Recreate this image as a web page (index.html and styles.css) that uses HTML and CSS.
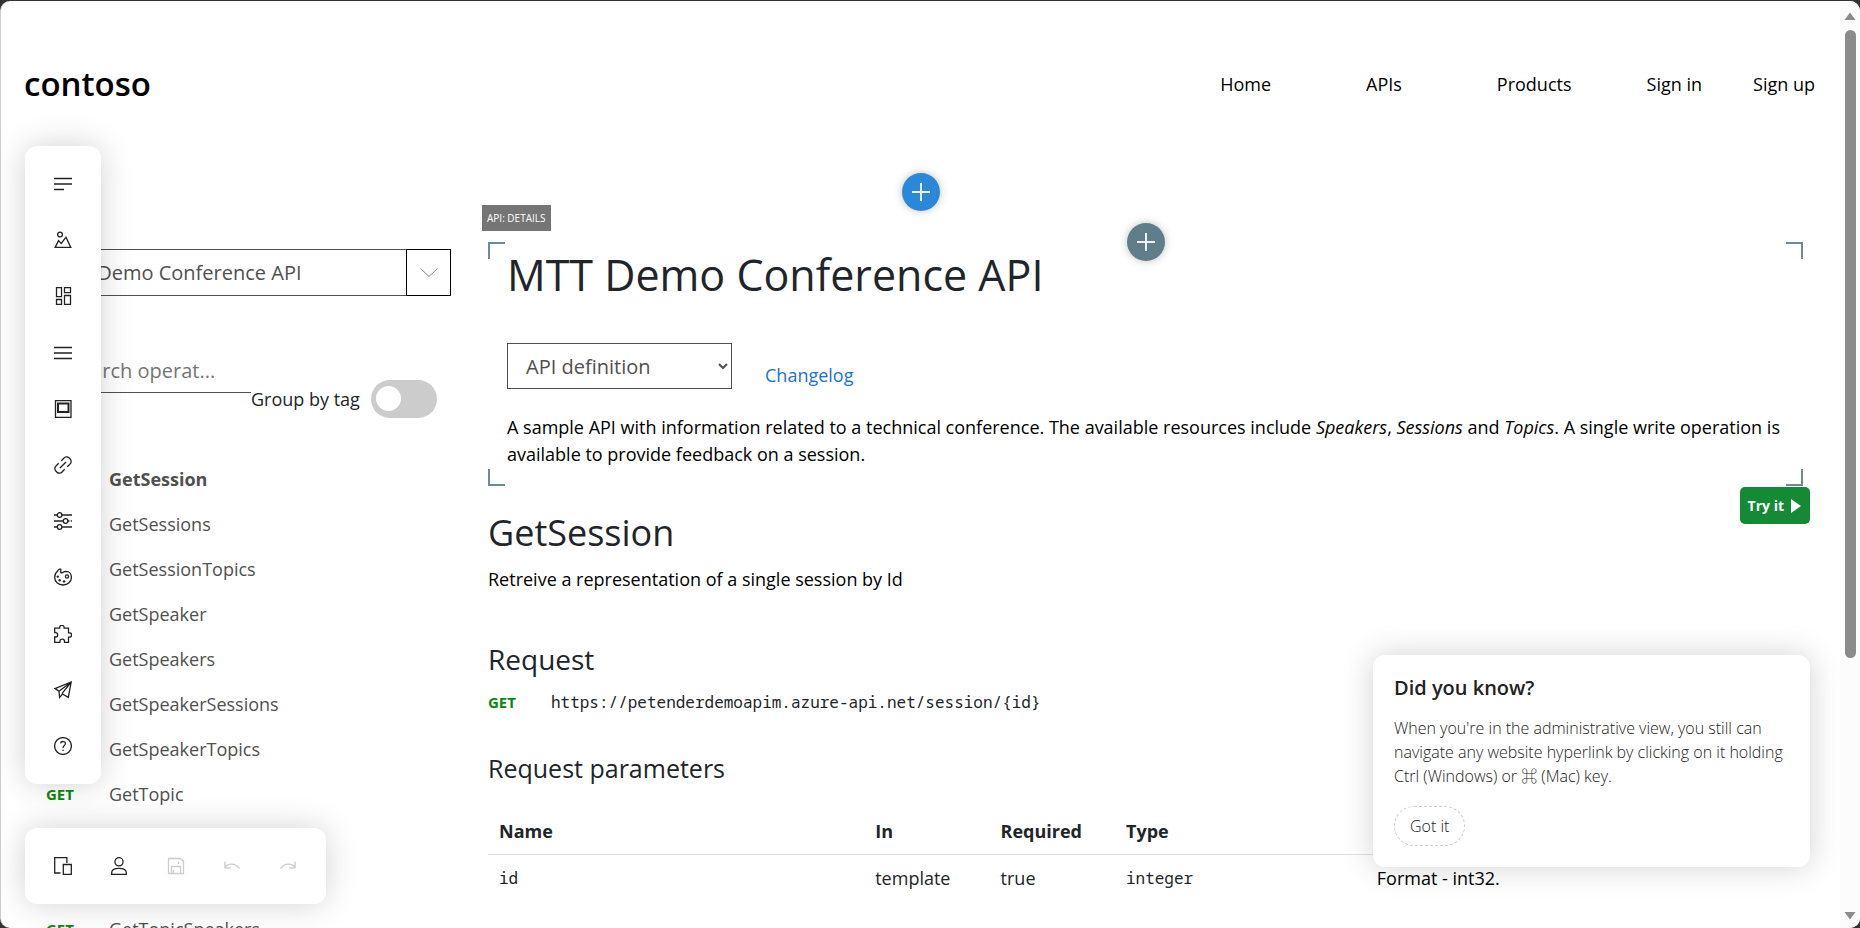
FILE: index.html
```html
<!DOCTYPE html>
<html lang="en">
<head>
<meta charset="utf-8">
<title>Contoso developer portal</title>
<link rel="stylesheet" href="styles.css">
</head>
<body>
<div class="window">
  <div class="page">
    <header class="header">
      <a class="logo" href="#">contoso</a>
      <nav class="nav">
        <a href="#">Home</a>
        <a href="#">APIs</a>
        <a href="#">Products</a>
      </nav>
      <nav class="account">
        <a href="#">Sign in</a>
        <a href="#">Sign up</a>
      </nav>
    </header>

    <div class="columns">
      <aside class="sidebar">
        <div class="api-picker">
          <input class="api-input" type="text" aria-label="API" value="MTT Demo Conference API" readonly>
          <button class="api-toggle" type="button" aria-label="Open API list">
            <svg width="20" height="12" viewBox="0 0 20 12"><path d="M1.500 1.500 10 9.500 18.500 1.500" /></svg>
          </button>
        </div>
        <div class="filters">
          <input class="search" type="text" aria-label="Search operations" placeholder="Search operat...">
          <label class="group" for="group-tag">Group by tag</label>
          <input class="switch" id="group-tag" type="checkbox">
        </div>
        <ul class="operations">
          <li><span class="verb">GET</span><a class="current" href="#">GetSession</a></li>
          <li><span class="verb">GET</span><a href="#">GetSessions</a></li>
          <li><span class="verb">GET</span><a href="#">GetSessionTopics</a></li>
          <li><span class="verb">GET</span><a href="#">GetSpeaker</a></li>
          <li><span class="verb">GET</span><a href="#">GetSpeakers</a></li>
          <li><span class="verb">GET</span><a href="#">GetSpeakerSessions</a></li>
          <li><span class="verb">GET</span><a href="#">GetSpeakerTopics</a></li>
          <li><span class="verb">GET</span><a href="#">GetTopic</a></li>
          <li><span class="verb">GET</span><a href="#">GetTopics</a></li>
          <li><span class="verb">GET</span><a href="#">GetTopicSessions</a></li>
          <li><span class="verb">GET</span><a href="#">GetTopicSpeakers</a></li>
        </ul>
      </aside>

      <main class="main">
        <section class="details">
          <span class="widget-tag">API: DETAILS</span>
          <i class="corner tl"></i><i class="corner tr"></i><i class="corner bl"></i><i class="corner br"></i>
          <button class="add add-widget" type="button" aria-label="Add widget">
            <svg width="18" height="18" viewBox="0 0 18 18"><path d="M9 0v18M0 9h18" /></svg>
          </button>
          <h1>MTT Demo Conference API</h1>
          <div class="definition">
            <select aria-label="API definition"><option>API definition</option></select>
            <a href="#">Changelog</a>
          </div>
          <p>A sample API with information related to a technical conference. The available resources include <em>Speakers</em>, <em>Sessions</em> and <em>Topics</em>. A single write operation is available to provide feedback on a session.</p>
        </section>

        <section class="operation">
          <button class="try" type="button">Try it
            <svg width="10" height="14" viewBox="0 0 10 14"><path d="M0 0 10 7 0 14z" /></svg>
          </button>
          <h2>GetSession</h2>
          <p>Retreive a representation of a single session by Id</p>
          <h3>Request</h3>
          <div class="request"><span class="verb">GET</span><code>https://petenderdemoapim.azure-api.net/session/{id}</code></div>
          <h4>Request parameters</h4>
          <table>
            <colgroup><col class="c-name"><col class="c-in"><col class="c-req"><col class="c-type"><col class="c-desc"></colgroup>
            <thead><tr><th>Name</th><th>In</th><th>Required</th><th>Type</th><th>Description</th></tr></thead>
            <tbody><tr><td><code>id</code></td><td>template</td><td>true</td><td><code>integer</code></td><td class="note">Format - int32.</td></tr></tbody>
          </table>
        </section>
      </main>
    </div>

    <button class="add add-section" type="button" aria-label="Add section">
      <svg width="18" height="18" viewBox="0 0 18 18"><path d="M9 0v18M0 9h18" /></svg>
    </button>

    <div class="toolbar side" role="toolbar" aria-label="Editor">
      <button type="button" aria-label="Pages"><svg viewBox="0 0 18 18"><path d="M0 3.500h18M0 9h18M0 14.500h10" /></svg></button>
      <button type="button" aria-label="Media"><svg viewBox="0 0 18 18"><circle cx="6" cy="3.500" r="2.400" /><path d="M1.200 16.400 4.500 9.600 7.200 12.400 12 6.200 16.800 16.400z" /></svg></button>
      <button type="button" aria-label="Layouts"><svg viewBox="0 0 18 18"><path d="M2.500.600h5v9h-5zM10.500.600h6v5h-6zM2.500 12.500h5v5h-5zM10.500 8.500h6v9h-6z" /></svg></button>
      <button type="button" aria-label="Navigation"><svg viewBox="0 0 18 18"><path d="M0 3.500h18M0 9h18M0 14.500h18" /></svg></button>
      <button type="button" aria-label="Pop-ups"><svg viewBox="0 0 18 18"><path d="M1.500.600h15.500v16.800H1.500z" /><path class="bold" d="M4 3.500h10.500v8.500H4z" /></svg></button>
      <button type="button" aria-label="URLs"><svg viewBox="0 0 18 18"><path d="M6 12 12 6M7.300 4.700 9.800 2.200a3.500 3.500 0 0 1 5.200-.4l1.200 1.200a3.500 3.500 0 0 1-.4 5.200L13.300 10.700M4.700 7.300 2.200 9.800a3.500 3.500 0 0 0-.4 5.200l1.200 1.200a3.500 3.500 0 0 0 5.200-.4L10.700 13.300" /></svg></button>
      <button type="button" aria-label="Settings"><svg viewBox="0 0 18 18"><path d="M0 3h3.200M8 3h10M0 9h9.200M14 9h1.500M16.800 9H18M0 15h3.200M8 15h10" /><circle cx="5.600" cy="3" r="2.300" /><circle cx="11.600" cy="9" r="2.300" /><circle cx="5.600" cy="15" r="2.300" /></svg></button>
      <button type="button" aria-label="Styles"><svg viewBox="0 0 18 18"><path d="M3.600 3C4.500 1.200 6.200.700 6.700 1.200c.7.700-.5 2.500.3 3.500.9 1 2.300-1.300 5-1.400 3.500 0 5.400 2.900 5.400 6 0 4.300-3.500 7.700-8.300 7.700-4.900 0-8.400-3.200-8.400-7.600C.7 6.800 1.800 4.500 3.600 3z" /><circle cx="13" cy="8.500" r="1.600" /><circle class="dot" cx="3.800" cy="8.600" r="1.200" /><circle class="dot" cx="5.700" cy="12.300" r="1.200" /><circle class="dot" cx="10" cy="13.400" r="1.200" /></svg></button>
      <button type="button" aria-label="Plugins"><svg viewBox="0 0 18 18"><path d="M.7 3.200h5V2.300a2.200 2 0 0 1 4.400 0v.9h4.400v4.600h1a2.100 2.200 0 0 1 0 4.400h-1v5.100h-4v-1a2.300 2.100 0 0 0-4.600 0v1H.7v-5.300h.9a2.100 2.200 0 0 0 0-4.400H.7z" /></svg></button>
      <button type="button" aria-label="Publish"><svg viewBox="0 0 18 18"><path d="M1 7.600 17.200 1 14.300 16.400 8.500 13 5.600 16.400 5 10.200zM5 10.200 17.200 1 8 12.600" /></svg></button>
      <button type="button" aria-label="Help"><svg viewBox="0 0 18 18"><circle cx="9" cy="9" r="8.400" /><path d="M6.600 6.400C6.900 3.800 11.700 3.900 11.400 6.700c-.2 1.800-2.400 1.900-2.400 4.200" /><circle class="dot" cx="9" cy="13.200" r=".8" /></svg></button>
    </div>

    <div class="toolbar bottom" role="toolbar" aria-label="Workspace">
      <button type="button" aria-label="Screen size"><svg viewBox="0 0 18 18"><path d="M6.500 16H.700V.700h12.200V6M9.300 7.500h8v10H9.300z" /></svg></button>
      <button type="button" aria-label="Roles"><svg viewBox="0 0 18 18"><circle cx="9" cy="4.800" r="4.100" /><path d="M1.700 17.300v-1.500c0-3 2.800-4.400 7.300-4.400s7.300 1.400 7.300 4.400v1.500z" /></svg></button>
      <button type="button" aria-label="Save" disabled><svg viewBox="0 0 18 18"><path d="M1.500 1.500h12l3 3v12h-15zM4.500 16.500V9.500h9v7M6.500 13v3.500M11.500 4.500v2.500" /></svg></button>
      <button type="button" aria-label="Undo" disabled><svg viewBox="0 0 18 18"><path d="M2 4.500v6.300h6M2 10.500C5 6 12 5.500 16.500 11.500" /></svg></button>
      <button type="button" aria-label="Redo" disabled><svg viewBox="0 0 18 18"><path d="M16 4.500v6.300h-6M16 10.500C13 6 6 5.500 1.500 11.500" /></svg></button>
    </div>

    <aside class="hint">
      <h5>Did you know?</h5>
      <p>When you're in the administrative view, you still can navigate any website hyperlink by clicking on it holding Ctrl (Windows) or <span class="key">⌘</span> (Mac) key.</p>
      <button type="button">Got it</button>
    </aside>
  </div>

  <div class="scrollbar" aria-hidden="true">
    <svg width="12" height="8" viewBox="0 0 12 8"><path d="M6 .500 11.500 8H.500z" /></svg>
    <div class="track"><div class="thumb"></div></div>
    <svg width="12" height="8" viewBox="0 0 12 8"><path d="M.500 0h11L6 7.500z" /></svg>
  </div>
</div>
</body>
</html>
```
FILE: styles.css
```css
* { box-sizing: border-box; }

body {
  margin: 0;
  padding-top: 1px;
  height: 100vh;
  overflow: hidden;
  background: #333;
  font: 18px/27px "Open Sans", "Noto Sans", sans-serif;
  color: #000;
}

h1, h2, h3, h4, h5, p, ul { margin: 0; padding: 0; font-weight: 400; }
a { color: inherit; text-decoration: none; }
button, input, select { font: inherit; color: inherit; margin: 0; }
button { cursor: pointer; padding: 0; }
svg { fill: none; stroke: currentColor; }
code { font: 16px/27px "Noto Sans Mono", "DejaVu Sans Mono", monospace; color: #212529; }

.window {
  display: flex;
  height: 100%;
  overflow: hidden;
  background: #fff;
  border-left: 1px solid #ccc;
  border-radius: 10px;
}

.page { position: relative; flex: 1; overflow: hidden; }

.header {
  display: flex;
  align-items: center;
  height: 166px;
  padding: 0 25px 0 23px;
}
.logo { margin-right: auto; font-size: 33px; line-height: 40px; font-weight: 600; }
.nav { display: flex; gap: 95px; margin-right: 75px; }
.account { display: flex; gap: 51px; }

.columns { display: grid; grid-template-columns: 450px 1fr; gap: 37px; }

/* Operation list */
.sidebar { padding: 82px 0 0 40px; color: #505050; }
.api-picker { display: flex; height: 47px; }
.api-input {
  flex: 1;
  min-width: 0;
  padding: 0 10px;
  border: 1px solid #505050;
  border-right: 0;
  font-size: 20px;
  background: #fff;
}
.api-toggle { width: 45px; border: 1px solid #000; background: #fff; color: #7a8a96; }

.filters { display: flex; align-items: flex-end; margin-top: 52px; }
.search {
  width: 210px;
  height: 45px;
  margin-bottom: 25px;
  padding: 0 28px;
  border: 0;
  border-bottom: 1px solid #505050;
  background: #fff;
  font-size: 20px;
}
.search::placeholder { color: #757575; opacity: 1; }
.group { padding-bottom: 5px; color: #212529; }
.switch {
  appearance: none;
  width: 66px;
  height: 38px;
  margin-left: auto;
  margin-right: 14px;
  padding: 6px 5px;
  border-radius: 19px;
  background: #ccc;
}
.switch::before {
  content: "";
  display: block;
  width: 25px;
  height: 25px;
  border-radius: 50%;
  background: #fff;
}

.operations { list-style: none; margin-top: 39px; }
.operations li { display: flex; padding: 9px 5px; }
.operations .verb { width: 63px; }
.operations .current { font-weight: 700; }
.verb { color: #078a0c; font-size: 15px; font-weight: 700; }

/* API details */
.main { padding: 75px 30px 0 0; }
.details { position: relative; margin-right: 7px; padding: 6px 19px 18px; }
.details h1 { font-size: 43px; line-height: 54px; color: #212529; }
.details a { color: #1a73d0; }
.definition { display: flex; align-items: flex-end; gap: 33px; margin: 41px 0 25px; }
.definition select {
  width: 225px;
  height: 46px;
  padding: 0 0 0 14px;
  border: 1px solid #505050;
  border-radius: 0;
  background: #fff;
  color: #505050;
  font-size: 20px;
}
.widget-tag {
  position: absolute;
  top: -37px;
  left: -6px;
  padding: 0 5px;
  background: #757575;
  color: #fff;
  font-size: 10px;
  line-height: 26px;
}
.corner { position: absolute; width: 17px; height: 17px; border: 0 solid #6f8a97; }
.tl { top: 0; left: 0; border-width: 2px 0 0 2px; }
.tr { top: 0; right: 0; border-width: 2px 2px 0 0; }
.bl { bottom: 0; left: 0; border-width: 0 0 2px 2px; }
.br { bottom: 0; right: 0; border-width: 0 2px 2px 0; }

.add {
  position: absolute;
  display: grid;
  place-items: center;
  width: 38px;
  height: 38px;
  border: 0;
  border-radius: 50%;
  color: #fff;
  box-shadow: 0 0 8px rgba(0, 0, 0, .25);
  transform: translate(-50%, -50%);
}
.add svg { stroke-width: 2; opacity: .9; }
.add-section { top: 191px; left: 50%; background: #2b88d8; }
.add-widget { top: 0; left: 50%; background: #607d8b; }

/* Operation */
.operation h2, .operation h3, .operation h4, .operation th, .operation td { color: #212529; }
.operation h2 { padding-top: 24px; font-size: 36px; line-height: 45px; }
.operation > p { margin-top: 11px; }
.operation h3 { margin-top: 48px; font-size: 28px; line-height: 36px; }
.request { display: flex; gap: 35px; margin-top: 12px; }
.operation h4 { margin-top: 37px; font-size: 25px; line-height: 30px; }
.try {
  float: right;
  display: flex;
  align-items: center;
  gap: 7px;
  height: 37px;
  margin-top: 1px;
  padding: 0 9px 0 8px;
  border: 0;
  border-radius: 5px;
  background: #138a33;
  color: #fff;
  font-size: 14px;
  font-weight: 700;
}
.try svg { fill: #fff; stroke: none; }

table { width: calc(100% - 68px); margin-top: 26px; border-collapse: collapse; table-layout: fixed; }
.c-name, .c-desc { width: 30%; }
.c-in, .c-req { width: 10%; }
.c-type { width: 20%; }
th, td { padding: 9px 11px; text-align: left; }
th { border-bottom: 1px solid #dee2e6; }
.operation .note { color: #000; }

/* Floating panels */
.toolbar, .hint {
  position: absolute;
  border-radius: 12px;
  background: #fff;
  box-shadow: 0 0 32px rgba(0, 0, 0, .18);
}
.toolbar { display: flex; left: 24px; padding: 10px; color: #222; }
.toolbar button {
  flex: 1;
  display: grid;
  place-items: center;
  border: 0;
  background: none;
}
.toolbar svg { width: 18px; height: 18px; stroke-width: 1.3; }
.toolbar button:disabled { color: #ccc; }
.toolbar .dot { fill: currentColor; stroke: none; }
.toolbar .bold { stroke-width: 2; }
.side { flex-direction: column; top: 145px; bottom: 144px; width: 76px; }
.bottom { bottom: 24px; width: 301px; height: 76px; }

.hint { right: 30px; bottom: 61px; width: 437px; padding: 19px 21px 21px; color: #222; }
.hint h5 { font-size: 20px; line-height: 27px; font-weight: 600; }
.hint p { margin-top: 15px; font-size: 16px; line-height: 24px; font-weight: 300; }
.key { font-family: "Noto Sans CJK JP", sans-serif; line-height: 16px; }
.hint button {
  height: 40px;
  margin-top: 18px;
  padding: 0 15px;
  border: 1px dashed #ccc;
  border-radius: 20px;
  background: none;
  font-size: 16px;
  font-weight: 300;
}

/* Scroll bar */
.scrollbar {
  display: flex;
  flex-direction: column;
  align-items: center;
  width: 20px;
  padding: 11px 3px 8px;
  background: #fcfcfc;
}
.scrollbar svg { fill: #8b8b8b; stroke: none; }
.track { flex: 1; padding: 10px 0; }
.thumb { width: 11px; height: 72%; border-radius: 6px; background: #8b8b8b; }
```
